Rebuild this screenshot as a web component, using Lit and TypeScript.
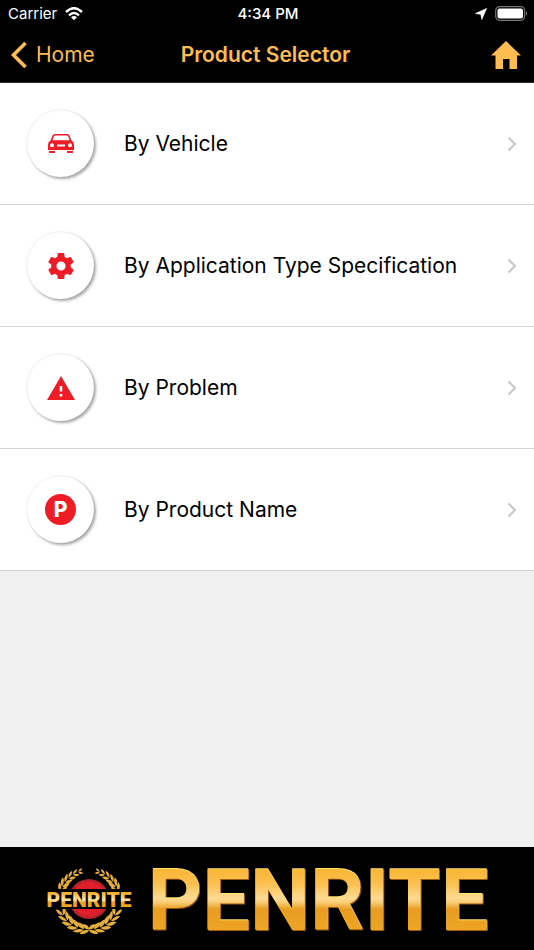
import { LitElement, html, css, svg } from "lit";
import { customElement } from "lit/decorators.js";

const icons = {
  car: svg`<svg viewBox="0 0 28 20" width="28" height="20" aria-hidden="true">
    <path fill="#ee1c25" fill-rule="evenodd" d="M8 0H20Q22 0 22.700 2L24.500 6.600Q27 8 27 10.500V16H1V10.500Q1 8 3.500 6.600L5.300 2Q6 0 8 0ZM8.300 1.500Q7.200 1.500 6.800 2.600L5.400 6.300H22.600L21.200 2.600Q20.800 1.500 19.700 1.500ZM5 9.300A2 2 0 1 0 5 13.300A2 2 0 1 0 5 9.300ZM23 9.300A2 2 0 1 0 23 13.300A2 2 0 1 0 23 9.300ZM10 10.500V12.500H18V10.500Z"/>
    <path fill="#ee1c25" d="M2 17H8V18.500Q8 19 7 19H3Q2 19 2 18.500ZM20 17H26V18.500Q26 19 25 19H21Q20 19 20 18.500Z"/>
  </svg>`,
  gear: svg`<svg viewBox="2 2 20 20" width="26" height="26" aria-hidden="true">
    <path fill="#ee1c25" d="M19.430 12.980c.04-.32.070-.64.070-.98s-.03-.66-.07-.98l2.110-1.650c.19-.15.240-.42.120-.64l-2-3.460c-.12-.22-.39-.3-.61-.22l-2.490 1c-.52-.4-1.080-.73-1.690-.98l-.38-2.650A.488.488 0 0 0 14 2h-4c-.25 0-.46.180-.49.420l-.38 2.650c-.61.250-1.170.59-1.690.98l-2.490-1c-.23-.09-.49 0-.61.220l-2 3.460c-.13.220-.07.490.12.640l2.110 1.650c-.04.320-.07.650-.07.980s.03.660.07.980l-2.110 1.650c-.19.150-.24.420-.12.640l2 3.460c.12.220.39.300.61.220l2.490-1c.52.400 1.080.730 1.690.980l.38 2.650c.03.240.24.420.49.420h4c.25 0 .46-.18.490-.42l.38-2.650c.61-.25 1.170-.59 1.690-.98l2.490 1c.23.090.49 0 .61-.22l2-3.460c.12-.22.070-.49-.12-.64zM12 15.500c-1.930 0-3.500-1.570-3.500-3.500s1.570-3.500 3.500-3.500 3.500 1.570 3.500 3.500-1.570 3.500-3.500 3.500z"/>
  </svg>`,
  warning: svg`<svg viewBox="0 0 28 24" width="28" height="24" aria-hidden="true">
    <path fill="#ee1c25" fill-rule="evenodd" d="M14 0L28 24H0ZM12.700 10V15.500H15.300V10ZM12.700 18V20.600H15.300V18Z"/>
  </svg>`,
  product: html`<span class="p-badge" aria-hidden="true">P</span>`,
};

const rows = [
  { label: "By Vehicle", icon: icons.car },
  { label: "By Application Type Specification", icon: icons.gear },
  { label: "By Problem", icon: icons.warning },
  { label: "By Product Name", icon: icons.product },
];

// Leaf pairs of the wreath: angle from the top in degrees, and leaf scale.
const leaves = [
  [17, 0.7], [27, 0.85], [37, 1], [47, 1.1], [57, 1.2], [67, 1.2],
  [114, 1.2], [126, 1.3], [138, 1.4], [150, 1.4], [162, 1.4], [173, 1.3],
];

const branch = () => leaves.map(([angle, size]) => svg`
  <g transform="rotate(${-angle} 44 33) translate(44 3) scale(${size})">
    <path d="M-3 0Q-1 -4 4 -3.500Q2.500 0 -3 0Z"/>
    <path d="M-3 .5Q1 0 3.500 3.800Q-2 5 -3 .5Z"/>
  </g>`);

@customElement("app-root")
export class AppRoot extends LitElement {
  static styles = css`
    :host {
      display: flex;
      flex-direction: column;
      min-height: 100vh;
      background: #f1f1f1;
      color: #000;
      font-family: Inter, "Liberation Sans", sans-serif;
    }
    * { box-sizing: border-box; }
    svg { display: block; flex: none; }
    header { background: #000; border-bottom: 1px solid #2b2b2b; }
    .status, .bar {
      display: grid;
      grid-template-columns: 1fr auto 1fr;
      align-items: center;
    }
    .status {
      height: 27px;
      padding: 0 6px 0 8px;
      color: #fff;
      font-size: 15px;
    }
    .clock { font-weight: 500; }
    .left, .right { display: flex; align-items: center; gap: 8px; }
    .right { justify-content: flex-end; }
    .bar { height: 55px; padding: 0 13px 0 10px; color: #ffbc51; }
    h1 { margin: 0; font-size: 21px; font-weight: 600; }
    button {
      display: flex;
      align-items: center;
      gap: 8px;
      padding: 0;
      border: 0;
      background: none;
      color: inherit;
      font: inherit;
      font-size: 21px;
      cursor: pointer;
    }
    .home { justify-self: end; }
    ul { margin: 0; padding: 0; list-style: none; background: #fff; }
    .row {
      display: flex;
      align-items: center;
      min-height: 122px;
      padding: 0 17px 0 27px;
      border-bottom: 1px solid #d6d6d6;
      color: #000;
      font-size: 21px;
      text-decoration: none;
    }
    .disc {
      display: grid;
      place-items: center;
      flex: none;
      width: 67px;
      height: 67px;
      margin-right: 30px;
      border-radius: 50%;
      background: #fff;
      box-shadow: 2px 2px 3px rgba(0, 0, 0, 0.34), 0 0 2px rgba(0, 0, 0, 0.14);
    }
    .label { flex: 1; }
    .p-badge {
      display: grid;
      place-items: center;
      width: 31px;
      height: 31px;
      border-radius: 50%;
      background: #ee1c25;
      color: #fff;
      font-size: 21px;
      font-weight: 800;
      line-height: 31px;
    }
    footer {
      display: flex;
      align-items: center;
      justify-content: center;
      gap: 14px;
      min-height: 103px;
      margin-top: auto;
      padding: 4px 12px 0;
      background: #000;
    }
    .emblem-text { font: 900 21px Roboto, sans-serif; }
    .wordmark {
      padding: 2px 0;
      font: 700 85px/64px Roboto, sans-serif;
      color: transparent;
      background: linear-gradient(#f8b431 0%, #fbc050 25%, #fddb92 46%, #f9cd76 52%, #e89d20 62%, #f0a626 100%);
      -webkit-background-clip: text;
      background-clip: text;
      filter: drop-shadow(0 -1px 0 #ffe36d) drop-shadow(1px 1px 0 #9a5a16);
    }
  `;

  render() {
    return html`
      <header>
        <div class="status">
          <div class="left">
            <span>Carrier</span>
            <svg viewBox="0 0 18 14" width="18" height="14" aria-label="Wi-Fi">
              <g fill="none" stroke="#fff" stroke-width="2.400">
                <path d="M1 5Q9 -2.500 17 5"/><path d="M4 8.300Q9 3.800 14 8.300"/>
              </g>
              <path fill="#fff" d="M6 10.200Q9 7.600 12 10.200L9 13.200Z"/>
            </svg>
          </div>
          <span class="clock">4:34 PM</span>
          <div class="right">
            <svg viewBox="0 0 12 12" width="12" height="12" aria-label="Location">
              <path fill="#fff" stroke="#fff" stroke-width=".6" d="M11.600 .4L6.800 11.500L5.800 6.300L.4 5.500Z"/>
            </svg>
            <svg viewBox="0 0 33 15" width="33" height="15" aria-label="Battery">
              <rect x=".7" y=".7" width="29" height="13.600" rx="4" fill="none" stroke="#777" stroke-width="1.200"/>
              <rect x="2.500" y="2.500" width="25.500" height="10" rx="2" fill="#fff"/>
              <path fill="#777" d="M31 5Q33 7.500 31 10Z"/>
            </svg>
          </div>
        </div>
        <div class="bar">
          <div class="left">
            <button>
              <svg viewBox="0 0 18 28" width="18" height="28" aria-hidden="true">
                <path d="M15.500 2L3.500 14L15.500 26" fill="none" stroke="#ffbc51" stroke-width="3.600"/>
              </svg>
              <span>Home</span>
            </button>
          </div>
          <h1>Product Selector</h1>
          <button class="home" aria-label="Go to home">
            <svg viewBox="0 0 30 28" width="30" height="28" aria-hidden="true">
              <path fill="#ffbc51" d="M15 0L30 14.500H26V28H18.500V18H12V28H4.500V14.500H0Z"/>
            </svg>
          </button>
        </div>
      </header>
      <main>
        <ul>
          ${rows.map((row) => html`
            <li>
              <a class="row" href="#">
                <span class="disc">${row.icon}</span>
                <span class="label">${row.label}</span>
                <svg viewBox="0 0 10 16" width="10" height="16" aria-hidden="true">
                  <path d="M1.500 1.500L8 8L1.500 14.500" fill="none" stroke="#c7c7cc" stroke-width="2"/>
                </svg>
              </a>
            </li>`)}
        </ul>
      </main>
      <footer>
        <svg viewBox="0 0 88 68" width="88" height="68" aria-label="Penrite emblem">
          <defs>
            <linearGradient id="gold" x1="0" y1="0" x2="0" y2="1">
              <stop offset="0.200" stop-color="#f6b02c"/>
              <stop offset="0.500" stop-color="#ffe9a8"/>
              <stop offset="0.600" stop-color="#eda01c"/>
              <stop offset="0.900" stop-color="#f3a81f"/>
            </linearGradient>
            <radialGradient id="red">
              <stop offset="0.800" stop-color="#e01f2b"/>
              <stop offset="1" stop-color="#a3222a"/>
            </radialGradient>
          </defs>
          <g fill="#e5ae3c">${branch()}</g>
          <g fill="#e5ae3c" transform="translate(88 0) scale(-1 1)">${branch()}</g>
          <circle cx="44" cy="32" r="20" fill="url(#red)"/>
          <rect x="2" y="22" width="84" height="20" fill="#000"/>
          <text class="emblem-text" x="44" y="40" text-anchor="middle" fill="url(#gold)">PENRITE</text>
        </svg>
        <div class="wordmark">PENRITE</div>
      </footer>
    `;
  }
}
